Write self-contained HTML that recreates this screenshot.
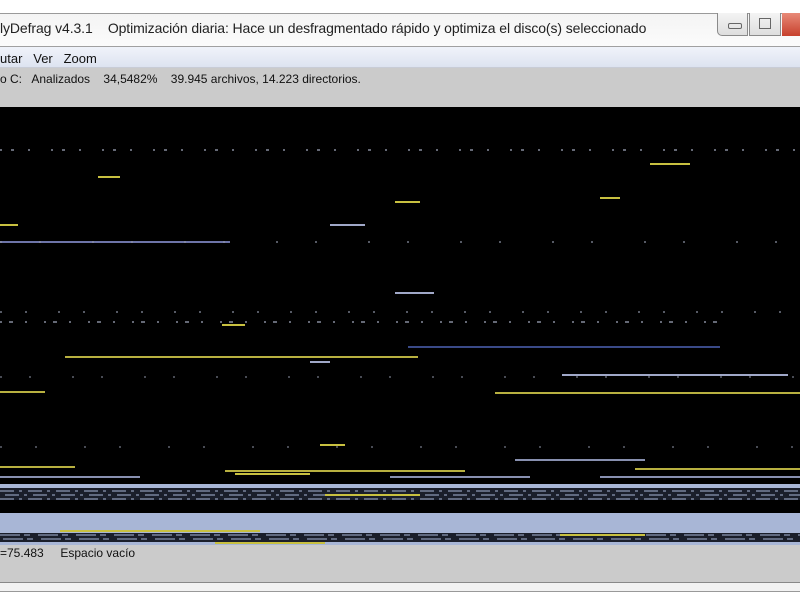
<!DOCTYPE html>
<html><head><meta charset="utf-8"><style>
body{margin:0;width:800px;height:600px;overflow:hidden;background:#fff;font-family:"Liberation Sans",sans-serif;position:relative}
.a{position:absolute}
</style></head><body>
<div class="a" style="left:0;top:0;width:800px;height:13px;background:#fff"></div>
<div class="a" style="left:0;top:13px;width:800px;height:34px;background:linear-gradient(#f4f4f4,#fbfbfb);border-top:1px solid #9a9a9a;border-bottom:1px solid #a0a0a0;box-sizing:border-box"></div>
<div class="a" style="left:0;top:20px;font-size:14px;color:#222;white-space:pre;letter-spacing:-0.1px">lyDefrag v4.3.1    Optimización diaria: Hace un desfragmentado rápido y optimiza el disco(s) seleccionado</div>
<div class="a" style="left:717px;top:13px;width:31px;height:23px;border:1px solid #8a8a8a;border-top:none;border-radius:0 0 0 5px;background:linear-gradient(#f4f4f4,#dedede);box-sizing:border-box"></div>
<div class="a" style="left:728px;top:23px;width:12px;height:4px;border:1px solid #666;border-radius:2px"></div>
<div class="a" style="left:749px;top:13px;width:32px;height:23px;border:1px solid #8a8a8a;border-top:none;background:linear-gradient(#f4f4f4,#dedede);box-sizing:border-box"></div>
<div class="a" style="left:759px;top:18px;width:10px;height:9px;border:1px solid #666"></div>
<div class="a" style="left:782px;top:13px;width:18px;height:23px;background:linear-gradient(#e88a78,#c7402c)"></div>
<div class="a" style="left:0;top:47px;width:800px;height:21px;background:linear-gradient(#f0f3fa,#dde3f0);border-bottom:1px solid #c8ccd6;box-sizing:border-box"></div>
<div class="a" style="left:0;top:51px;font-size:13px;color:#111;white-space:pre">utar   Ver   Zoom</div>
<div class="a" style="left:0;top:68px;width:800px;height:39px;background:#cbcbcb"></div>
<div class="a" style="left:0;top:72px;font-size:12px;color:#111;white-space:pre">o C:   Analizados    34,5482%    39.945 archivos, 14.223 directorios.</div>
<svg class="a" style="left:0;top:107px" width="800" height="438">
<rect width="800" height="438" fill="#000"/>
<g stroke-width="2">
<line x1="0" y1="135" x2="230" y2="135" stroke="#6d74a8"/>
<line x1="65" y1="250" x2="418" y2="250" stroke="#b8b040"/>
<line x1="408" y1="240" x2="720" y2="240" stroke="#3a4a88"/>
<line x1="562" y1="268" x2="788" y2="268" stroke="#a0a8c8"/>
<line x1="495" y1="286" x2="800" y2="286" stroke="#b8b040"/>
<line x1="650" y1="57" x2="690" y2="57" stroke="#c8c040"/>
<line x1="98" y1="70" x2="120" y2="70" stroke="#c8c040"/>
<line x1="600" y1="91" x2="620" y2="91" stroke="#c8c040"/>
<line x1="0" y1="118" x2="18" y2="118" stroke="#c8c040"/>
<line x1="0" y1="285" x2="45" y2="285" stroke="#b8b040"/>
<line x1="395" y1="95" x2="420" y2="95" stroke="#c8c040"/>
<line x1="330" y1="118" x2="365" y2="118" stroke="#a0a8c8"/>
<line x1="222" y1="218" x2="245" y2="218" stroke="#c8c040"/>
<line x1="320" y1="338" x2="345" y2="338" stroke="#c8c040"/>
<line x1="0" y1="360" x2="75" y2="360" stroke="#b8b040"/>
<line x1="225" y1="364" x2="465" y2="364" stroke="#b8b040"/>
<line x1="515" y1="353" x2="645" y2="353" stroke="#8890b0"/>
<line x1="635" y1="362" x2="800" y2="362" stroke="#b8b040"/>
<line x1="235" y1="367" x2="310" y2="367" stroke="#c8c040"/>
<line x1="0" y1="370" x2="140" y2="370" stroke="#8890b0"/>
<line x1="390" y1="370" x2="530" y2="370" stroke="#8890b0"/>
<line x1="600" y1="370" x2="800" y2="370" stroke="#8890b0"/>
<line x1="310" y1="255" x2="330" y2="255" stroke="#a0a8c8"/>
<line x1="395" y1="186" x2="434" y2="186" stroke="#a0a8c8"/>
</g>
<g stroke="#9096a8" stroke-width="2">
<line x1="0" y1="43" x2="800" y2="43" stroke-dasharray="2 9 3 14 2 21" opacity=".7"/>
<line x1="0" y1="215" x2="720" y2="215" stroke-dasharray="2 7 4 12 2 17" opacity=".7"/>
<line x1="0" y1="205" x2="800" y2="205" stroke-dasharray="2 23 2 31" opacity=".6"/>
<line x1="0" y1="135" x2="800" y2="135" stroke-dasharray="2 37 2 51" opacity=".6"/>
<line x1="0" y1="270" x2="800" y2="270" stroke-dasharray="2 27 2 41" opacity=".5"/>
<line x1="0" y1="340" x2="800" y2="340" stroke-dasharray="2 33 2 47" opacity=".5"/>
</g>
<rect x="0" y="377" width="800" height="4" fill="#a8b6d6"/>
<rect x="0" y="381" width="800" height="12" fill="#1a1e2a"/>
<g stroke="#a8b6d6" stroke-width="1" stroke-dasharray="14 5 3 6">
<line x1="0" y1="384" x2="800" y2="384"/><line x1="5" y1="388" x2="800" y2="388"/><line x1="0" y1="392" x2="800" y2="392"/>
</g>
<line x1="325" y1="388" x2="420" y2="388" stroke="#c8c040" stroke-width="2"/>
<rect x="0" y="406" width="800" height="20" fill="#a8b6d6"/>
<rect x="0" y="426" width="800" height="9" fill="#1a1e2a"/>
<g stroke="#a8b6d6" stroke-width="1" stroke-dasharray="20 4 6 8">
<line x1="0" y1="428" x2="800" y2="428"/><line x1="3" y1="432" x2="800" y2="432"/>
</g>
<line x1="60" y1="424" x2="260" y2="424" stroke="#c8c040" stroke-width="2"/>
<line x1="560" y1="428" x2="645" y2="428" stroke="#c8c040" stroke-width="2"/>
<rect x="0" y="435" width="800" height="3" fill="#a8b6d6"/>
<line x1="215" y1="436" x2="325" y2="436" stroke="#c8c040" stroke-width="2"/>
</svg>
<div class="a" style="left:0;top:545px;width:800px;height:38px;background:#cbcbcb;border-bottom:1px solid #888;box-sizing:border-box"></div>
<div class="a" style="left:0;top:546px;font-size:12px;color:#111;white-space:pre">=75.483     Espacio vacío</div>
<div class="a" style="left:0;top:583px;width:800px;height:8px;background:#f2f2f2;border-bottom:1px solid #999"></div>
</body></html>
